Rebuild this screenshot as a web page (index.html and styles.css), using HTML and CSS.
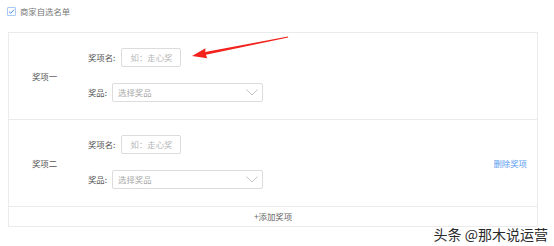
FILE: index.html
```html
<!DOCTYPE html>
<html lang="zh-CN">
<head>
    <meta charset="UTF-8">
    <meta name="viewport" content="width=device-width, initial-scale=1.0">
    <title>奖项设置</title>
    <link rel="stylesheet" href="styles.css">
</head>
<body>
    <label class="check-line">
        <span class="check-box">
            <svg width="7" height="7" viewBox="0 0 7 7"><path d="M1 3.6 L2.8 5.3 L6 1.6" fill="none" stroke="#4f93e8" stroke-width="1"/></svg>
        </span>
        <span>商家自选名单</span>
    </label>

    <div class="prize-box">
        <!-- 奖项一 -->
        <div class="prize-row">
            <div class="prize-title">奖项一</div>
            <div class="prize-fields">
                <div class="field">
                    <span class="field-label">奖项名:</span>
                    <div class="text-input">如：走心奖</div>
                </div>
                <div class="field">
                    <span class="field-label">奖品:</span>
                    <div class="select-input">
                        <span>选择奖品</span>
                        <svg width="12" height="7" viewBox="0 0 12 7"><path d="M0.5 0.5 L6 6 L11.5 0.5" fill="none" stroke="#c4c4c4" stroke-width="1"/></svg>
                    </div>
                </div>
            </div>
        </div>

        <!-- 奖项二 -->
        <div class="prize-row">
            <div class="prize-title">奖项二</div>
            <div class="prize-fields">
                <div class="field">
                    <span class="field-label">奖项名:</span>
                    <div class="text-input">如：走心奖</div>
                </div>
                <div class="field">
                    <span class="field-label">奖品:</span>
                    <div class="select-input">
                        <span>选择奖品</span>
                        <svg width="12" height="7" viewBox="0 0 12 7"><path d="M0.5 0.5 L6 6 L11.5 0.5" fill="none" stroke="#c4c4c4" stroke-width="1"/></svg>
                    </div>
                </div>
            </div>
            <a class="delete-link">删除奖项</a>
        </div>

        <div class="add-row">+添加奖项</div>
    </div>

    <!-- annotation arrow -->
    <svg class="arrow" width="554" height="246" viewBox="0 0 554 246">
        <polygon points="192,56 205.5,48.3 205.2,51.9 288,36.4 288.2,37.6 205.9,54.8 207.2,58.2" fill="#f2231d"/>
    </svg>

    <div class="watermark">头条 @那木说运营</div>
</body>
</html>
```

FILE: styles.css
```css
body {
    margin: 0;
    width: 554px;
    height: 246px;
    position: relative;
    background: #fff;
    font-family: "Noto Sans CJK SC", "Noto Sans", sans-serif;
    font-size: 8.4px;
    color: #666;
    overflow: hidden;
}

.check-line {
    display: flex;
    align-items: center;
    gap: 4px;
    padding: 6px 0 0 7px;
    height: 11px;
    line-height: 11px;
    color: #777;
}

.check-box {
    width: 7px;
    height: 7px;
    border: 1px solid #a9cbf3;
    border-radius: 1px;
    display: flex;
    align-items: center;
    justify-content: center;
}

.prize-box {
    margin: 15px 0 0 8px;
    width: 528px;
    border: 1px solid #ebebeb;
}

.prize-row {
    display: flex;
    align-items: center;
    height: 86px;
    box-sizing: content-box;
    border-bottom: 1px solid #ebebeb;
}

.prize-title {
    width: 56px;
    padding-left: 23px;
    box-sizing: border-box;
    color: #555;
}

.prize-fields {
    display: flex;
    flex-direction: column;
    gap: 16px;
    padding: 0 0 3px 23px;
    flex: 1;
}

.field {
    display: flex;
    align-items: center;
}

.field-label {
    color: #555;
    margin-right: 6px;
}

.text-input {
    width: 60px;
    height: 19px;
    box-sizing: border-box;
    border: 1px solid #dcdcdc;
    border-radius: 2px;
    color: #b8b8b8;
    line-height: 17px;
    text-align: center;
}

.select-input {
    width: 151px;
    height: 19px;
    box-sizing: border-box;
    border: 1px solid #dcdcdc;
    border-radius: 2px;
    display: flex;
    align-items: center;
    justify-content: space-between;
    padding: 0 4px 0 5px;
    margin-left: -1px;
    color: #a8a8a8;
}

.delete-link {
    color: #5b9cf0;
    margin-right: 10px;
    cursor: pointer;
}

.add-row {
    height: 19px;
    line-height: 19px;
    text-align: center;
    color: #666;
}

.arrow {
    position: absolute;
    top: 0;
    left: 0;
    pointer-events: none;
}

.watermark {
    position: absolute;
    right: 6px;
    bottom: 3px;
    font-size: 14px;
    line-height: 17px;
    color: #2a2a2a;
    text-shadow: 0 0 2px #fff, 0 0 2px #fff;
}
```
